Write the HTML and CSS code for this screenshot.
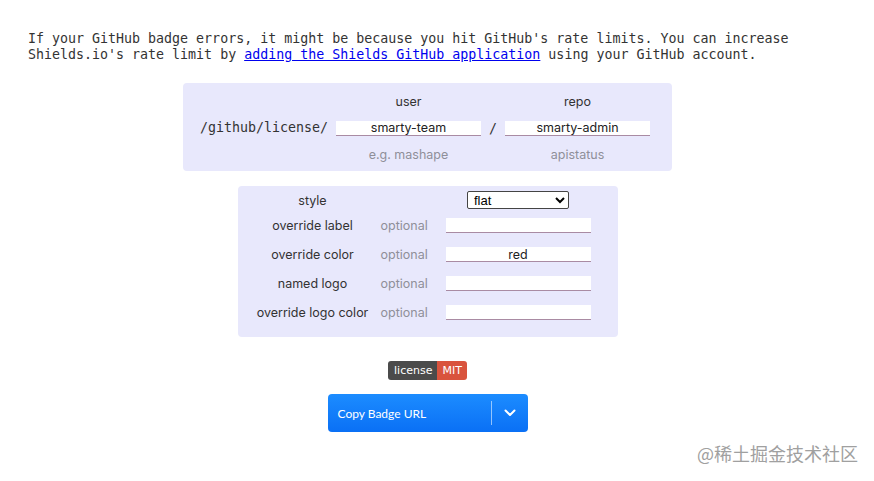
FILE: index.html
```html
<!DOCTYPE html>
<html lang="en">
<head>
<meta charset="utf-8">
<title>GitHub license badge</title>
<link rel="stylesheet" href="styles.css">
</head>
<body>
<div class="page">
  <p class="note">If your GitHub badge errors, it might be because you hit GitHub's rate limits. You can increase Shields.io's rate limit by <a href="#">adding the Shields GitHub application</a> using your GitHub account.</p>

  <div class="path-panel">
    <span></span>
    <span class="col-label user-col">user</span>
    <span></span>
    <span class="col-label">repo</span>

    <span class="prefix">/github/license/</span>
    <input class="field user-col" type="text" value="smarty-team">
    <span class="slash">/</span>
    <input class="field" type="text" value="smarty-admin">

    <span></span>
    <span class="hint user-col">e.g. mashape</span>
    <span></span>
    <span class="hint">apistatus</span>
  </div>

  <div class="query-panel">
    <span class="q-label">style</span>
    <span></span>
    <div class="q-cell">
      <select class="style-select">
        <option>flat</option>
      </select>
    </div>

    <span class="q-label">override label</span>
    <span class="q-opt">optional</span>
    <div class="q-cell"><input class="field" type="text" value=""></div>

    <span class="q-label">override color</span>
    <span class="q-opt">optional</span>
    <div class="q-cell"><input class="field" type="text" value="red"></div>

    <span class="q-label">named logo</span>
    <span class="q-opt">optional</span>
    <div class="q-cell"><input class="field" type="text" value=""></div>

    <span class="q-label">override logo color</span>
    <span class="q-opt">optional</span>
    <div class="q-cell"><input class="field" type="text" value=""></div>
  </div>

  <div class="badge">
    <span class="badge-label">license</span><span class="badge-value">MIT</span>
  </div>

  <div class="copy-btn">
    <span class="copy-text">Copy Badge URL</span>
    <span class="copy-sep"></span>
    <span class="copy-caret">
      <svg width="12" height="8" viewBox="0 0 12 8"><path d="M1.5 1.5 L6 6 L10.5 1.5" fill="none" stroke="#ffffff" stroke-width="2" stroke-linecap="round" stroke-linejoin="round"/></svg>
    </span>
  </div>
</div>
<div class="watermark">@稀土掘金技术社区</div>
</body>
</html>
```

FILE: styles.css
```css
html, body {
  margin: 0;
  padding: 0;
  background: #ffffff;
}

body {
  position: relative;
  width: 874px;
  height: 481px;
  overflow: hidden;
  font-family: Inter, "Liberation Sans", sans-serif;
  color: #333333;
}

.page {
  width: 855px;
  display: flex;
  flex-direction: column;
  align-items: center;
}

.note {
  align-self: stretch;
  margin: 31px 0 0 0;
  padding: 0 40px 0 28px;
  font-family: "DejaVu Sans Mono", "Liberation Mono", monospace;
  font-size: 13.3px;
  line-height: 16px;
  color: #333333;
}

.note a {
  color: #0000ee;
  text-decoration: underline;
}

/* path panel */
.path-panel {
  margin-top: 20px;
  width: 489px;
  box-sizing: border-box;
  background: #e8e8fc;
  border-radius: 4px;
  padding: 11px 22px 9px 17px;
  display: grid;
  grid-template-columns: 128px 153px 24px 145px;
  row-gap: 11px;
  align-items: center;
}

.path-panel .user-col {
  margin-left: 8px;
  width: 145px;
}

.col-label,
.hint {
  text-align: center;
  font-size: 12.5px;
  line-height: 15px;
}

.col-label {
  color: #333333;
}

.hint {
  color: #8f8f99;
}

.prefix {
  font-family: "DejaVu Sans Mono", "Liberation Mono", monospace;
  font-size: 13.3px;
  line-height: 16px;
  color: #333333;
}

.slash {
  font-family: "DejaVu Sans Mono", "Liberation Mono", monospace;
  font-size: 13.3px;
  text-align: center;
  color: #333333;
}

.field {
  box-sizing: border-box;
  width: 145px;
  height: 15px;
  margin: 0;
  padding: 0 4px;
  border: none;
  border-bottom: 1px solid #a98ba3;
  background: #ffffff;
  font-family: Inter, "Liberation Sans", sans-serif;
  font-size: 12.5px;
  line-height: 14px;
  text-align: center;
  color: #222222;
  outline: none;
}

/* query panel */
.query-panel {
  margin-top: 15px;
  width: 380px;
  box-sizing: border-box;
  background: #e8e8fc;
  border-radius: 4px;
  padding: 3px 27px 10px 10px;
  display: grid;
  grid-template-columns: 130px 47px 166px;
  grid-template-rows: 22px 29px 29px 29px 29px;
  align-items: center;
}

.q-cell {
  margin-left: 21px;
  display: flex;
  justify-content: center;
}

.q-label {
  text-align: center;
  font-size: 12.5px;
  color: #333333;
}

.q-opt {
  text-align: center;
  font-size: 12.5px;
  color: #8f8f99;
  padding-left: 3px;
}

.style-select {
  width: 102px;
  height: 18px;
  box-sizing: border-box;
  margin: 0;
  padding: 0 2px;
  border: 1px solid #444444;
  border-radius: 2px;
  background: #ffffff;
  font-family: "Liberation Sans", Arial, sans-serif;
  font-size: 13px;
  color: #000000;
}

/* badge */
.badge {
  margin-top: 24px;
  height: 19px;
  display: flex;
  border-radius: 3px;
  overflow: hidden;
  font-family: "DejaVu Sans", Verdana, sans-serif;
  font-size: 11px;
  line-height: 19px;
  color: #ffffff;
}

.badge-label {
  background: #4b4b4b;
  padding: 0 5px 0 6px;
}

.badge-value {
  background: #d9533d;
  padding: 0 5px;
}

/* copy button */
.copy-btn {
  margin-top: 14px;
  width: 200px;
  height: 38px;
  box-sizing: border-box;
  border-radius: 4px;
  background: linear-gradient(180deg, #1c8cff 0%, #0a70f5 100%);
  display: flex;
  align-items: center;
  color: #ffffff;
}

.copy-text {
  flex: 1;
  padding-left: 10px;
  font-family: Lato, "Liberation Sans", sans-serif;
  font-size: 12px;
}

.copy-sep {
  width: 1px;
  height: 24px;
  background: rgba(255, 255, 255, 0.55);
}

.copy-caret {
  width: 36px;
  display: flex;
  justify-content: center;
  align-items: center;
}

.watermark {
  position: absolute;
  left: 697px;
  top: 442px;
  font-family: "Noto Sans CJK SC", "Noto Sans", sans-serif;
  font-size: 18px;
  line-height: 22px;
  color: #a0a0a0;
  white-space: nowrap;
}
```
